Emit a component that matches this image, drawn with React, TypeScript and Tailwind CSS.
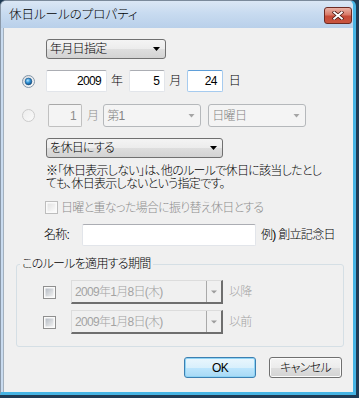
import React from 'react';

const jp = "font-['Liberation_Sans','Noto_Sans_CJK_JP',sans-serif] [font-feature-settings:'palt']";

function Radio({ checked = false, disabled = false }: { checked?: boolean; disabled?: boolean }) {
  return (
    <svg width="13" height="13" viewBox="0 0 13 13" className="shrink-0">
      <defs>
        <linearGradient id={disabled ? 'rbd' : 'rb'} x1="0" y1="0" x2="1" y2="1">
          <stop offset="0" stopColor={disabled ? '#ececec' : '#d6d9dd'} />
          <stop offset="1" stopColor={disabled ? '#fafafa' : '#fdfdfd'} />
        </linearGradient>
        <radialGradient id="rdot" cx="0.4" cy="0.35" r="0.75">
          <stop offset="0" stopColor="#b8e6ff" />
          <stop offset="0.45" stopColor="#2f92d6" />
          <stop offset="1" stopColor="#0a3f73" />
        </radialGradient>
      </defs>
      <circle cx="6.5" cy="6.5" r="6" fill={`url(#${disabled ? 'rbd' : 'rb'})`} stroke={disabled ? '#cbcbcb' : '#8396a8'} />
      {checked && <circle cx="6.5" cy="6.5" r="3.4" fill="url(#rdot)" stroke="#1d4f7d" strokeWidth="0.6" />}
    </svg>
  );
}

function Check({ disabled = false }: { disabled?: boolean }) {
  return (
    <svg width="13" height="13" viewBox="0 0 13 13" className="shrink-0">
      <defs>
        <linearGradient id={disabled ? 'cbd' : 'cb'} x1="0" y1="0" x2="1" y2="1">
          <stop offset="0" stopColor={disabled ? '#e2e2e2' : '#b6bcc4'} />
          <stop offset="1" stopColor={disabled ? '#fbfbfb' : '#f1f1f1'} />
        </linearGradient>
      </defs>
      <rect x="0.5" y="0.5" width="12" height="12" fill="#fafafa" stroke={disabled ? '#bdbdbd' : '#8f8f8f'} />
      <rect x="2.5" y="2.5" width="8" height="8" fill={`url(#${disabled ? 'cbd' : 'cb'})`} />
    </svg>
  );
}

function Arrow({ gray = false }: { gray?: boolean }) {
  return gray ? (
    <svg width="7" height="4" viewBox="0 0 7 4" className="shrink-0">
      <polygon points="0.5,0 6.5,0 3.5,3.5" fill="#a5a5a5" />
    </svg>
  ) : (
    <svg width="7" height="4" viewBox="0 0 7 4" className="shrink-0">
      <polygon points="0,0 7,0 3.5,4" fill="#000" />
    </svg>
  );
}

function Select({ label, width, disabled = false, height = 20 }: { label: string; width: string; disabled?: boolean; height?: number }) {
  const base = disabled
    ? 'border-[#b5b8bb] bg-[#f4f4f4] text-[#838383]'
    : 'border-[#707070] bg-[linear-gradient(#f4f4f4_0%,#ececec_50%,#dedede_51%,#d3d3d3_100%)] text-black';
  return (
    <div
      className={`flex items-center justify-between rounded-[3px] border pl-[3px] pr-[5px] ${base} ${width}`}
      style={{ height }}
    >
      <span className="leading-none">{label}</span>
      <Arrow gray={disabled} />
    </div>
  );
}

function TextBox({ value, width, focused = false, disabled = false }: { value: string; width: string; focused?: boolean; disabled?: boolean }) {
  const base = disabled
    ? 'border-[#c0c0c0] border-t-[#a8a8a8] bg-[#f4f4f4] text-[#8d8d8d]'
    : focused
      ? 'border-[#a6cbef] border-t-[#5f9fd9] bg-white text-black'
      : 'border-[#e2e5ea] border-t-[#abadb3] bg-white text-black';
  return (
    <div className={`flex h-full items-center justify-end rounded-[2px] border pr-[5px] ${base} ${width}`}>
      {value}
    </div>
  );
}

function DateCombo() {
  return (
    <div className="flex h-[24px] w-[152px] border-t border-l border-t-[#dcdcdc] border-l-[#dcdcdc] border-r-2 border-b-2 border-r-[#6e6e6e] border-b-[#6e6e6e] bg-[#f0f0f0]">
      <div className="flex flex-1 items-center pl-[3px] text-[#a3a3a3]">2009年1月8日(木)</div>
      <div className="flex w-[15px] items-center justify-center border-l border-l-[#a9a9a9]">
        <svg width="6" height="4" viewBox="0 0 6 4">
          <polygon points="0,0.5 6,0.5 3,3.5" fill="#9c9c9c" />
        </svg>
      </div>
    </div>
  );
}

export default function App() {
  return (
    <div className={`h-[398px] w-[359px] overflow-hidden bg-[#1f3b55] text-[12px] font-light ${jp}`}>
      <div className="flex h-[395px] w-[356px] flex-col rounded-t-[6px] border-t border-l border-r-[3px] border-b-[3px] border-t-[#7b8a9b] border-l-[#8a98a8] border-r-[#46b4e4] border-b-[#46b4e4] bg-[#c9dbef]">
        <div className="flex h-[27px] items-center justify-between rounded-t-[5px] bg-[linear-gradient(#dbe7f5_0%,#c8dbf0_45%,#b9d0ea_100%)] pl-[8px] pr-[1px]">
          <span className="pt-[1px] text-[12.5px] text-black">休日ルールのプロパティ</span>
          <div className="mt-[2px] flex h-[17px] w-[28px] items-center justify-center rounded-[3px] border border-[#6d2a22] bg-[linear-gradient(#eab2a6_0%,#d97a68_45%,#c64a37_55%,#c9553f_100%)]">
            <svg width="12" height="9" viewBox="0 0 12 9">
              <path d="M2.2 1.4 L9.8 7.6 M9.8 1.4 L2.2 7.6" stroke="#4b1a14" strokeWidth="3.4" strokeLinecap="square" />
              <path d="M2.2 1.4 L9.8 7.6 M9.8 1.4 L2.2 7.6" stroke="#fff" strokeWidth="1.9" strokeLinecap="square" />
            </svg>
          </div>
        </div>

        <div className="flex flex-1 pl-[2px]">
          <div className="flex flex-1 flex-col items-start border-l border-l-[#a3b0bd] bg-[#f0f0f0] tracking-[-0.7px]">
            <div className="mt-[11px] ml-[42px]">
              <Select label="年月日指定" width="w-[120px]" />
            </div>

            <div className="mt-[11px] ml-[18px] flex h-[22px] items-center">
              <Radio checked />
              <div className="ml-[11px] h-full">
                <TextBox value="2009" width="w-[61px]" />
              </div>
              <span className="ml-[4px]">年</span>
              <div className="ml-[7px] h-full">
                <TextBox value="5" width="w-[36px]" />
              </div>
              <span className="ml-[4px]">月</span>
              <div className="ml-[6px] h-full">
                <TextBox value="24" width="w-[36px]" focused />
              </div>
              <span className="ml-[6px]">日</span>
            </div>

            <div className="mt-[12px] ml-[18px] flex h-[23px] items-center">
              <Radio disabled />
              <div className="ml-[13px] h-full">
                <TextBox value="1" width="w-[34px]" disabled />
              </div>
              <span className="ml-[5px] text-[#8d8d8d]">月</span>
              <div className="ml-[5px]">
                <Select label="第1" width="w-[98px]" disabled height={23} />
              </div>
              <div className="ml-[7px]">
                <Select label="日曜日" width="w-[98px]" disabled height={23} />
              </div>
            </div>

            <div className="mt-[11px] ml-[42px]">
              <Select label="を休日にする" width="w-[177px]" />
            </div>

            <p className="mt-[7px] ml-[42px] leading-[13px] text-black">
              ※「休日表示しない」は、他のルールで休日に該当したとし
              <br />
              ても、休日表示しないという指定です。
            </p>

            <div className="mt-[10px] ml-[41px] flex h-[13px] items-center">
              <Check disabled />
              <span className="ml-[3px] text-[#8d8d8d]">日曜と重なった場合に振り替え休日とする</span>
            </div>

            <div className="mt-[10px] ml-[40px] flex h-[22px] items-center">
              <span className="w-[38px]">名称:</span>
              <div className="h-full">
                <TextBox value="" width="w-[174px]" />
              </div>
              <span className="ml-[5px]">例) 創立記念日</span>
            </div>

            <fieldset className="mt-[11px] ml-[12px] w-[328px] rounded-[3px] border border-[#d5dfe5] pt-[9px] pb-[12px]">
              <legend className="ml-[3px] px-[2px] leading-[14px] text-black">このルールを適用する期間</legend>
              <div className="flex h-[24px] items-center pl-[26px]">
                <Check />
                <div className="ml-[15px]">
                  <DateCombo />
                </div>
                <span className="ml-[6px] text-[#a3a3a3]">以降</span>
              </div>
              <div className="mt-[6px] flex h-[24px] items-center pl-[26px]">
                <Check />
                <div className="ml-[15px]">
                  <DateCombo />
                </div>
                <span className="ml-[6px] text-[#a3a3a3]">以前</span>
              </div>
            </fieldset>

            <div className="mt-[10px] ml-[180px] flex gap-[13px]">
              <button className="h-[21px] w-[72px] rounded-[3px] border border-[#3c7fb1] bg-[linear-gradient(#eaf6fd_0%,#d9f0fc_50%,#bee6fd_51%,#a7d9f5_100%)] text-black shadow-[inset_0_0_0_1px_#8fd4f5]">
                OK
              </button>
              <button className="h-[21px] w-[73px] rounded-[3px] border border-[#707070] bg-[linear-gradient(#f4f4f4_0%,#ececec_50%,#dedede_51%,#d3d3d3_100%)] text-black shadow-[inset_0_0_0_1px_#fbfbfb]">
                キャンセル
              </button>
            </div>
          </div>
        </div>
      </div>
    </div>
  );
}
